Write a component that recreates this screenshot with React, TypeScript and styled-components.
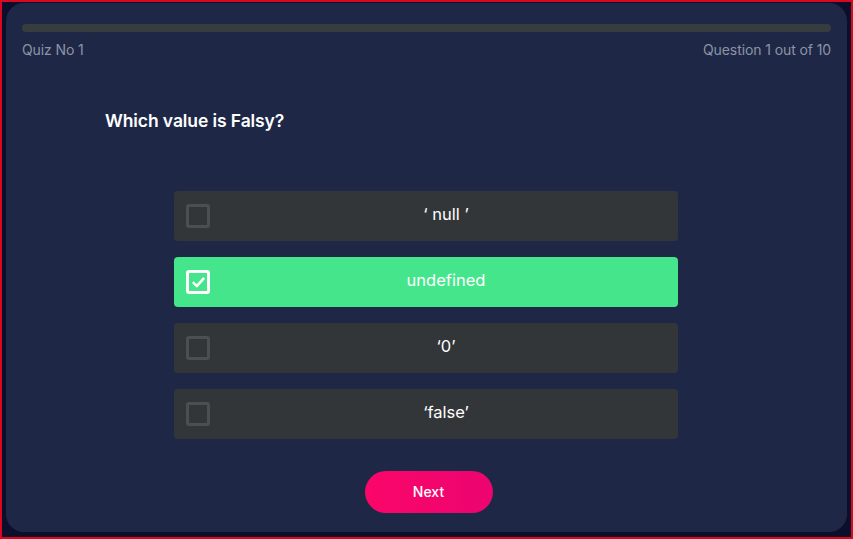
import React, { useState } from "react";
import styled, { createGlobalStyle } from "styled-components";

const GlobalStyle = createGlobalStyle`
  html, body {
    margin: 0;
    padding: 0;
    background: #0c0e2b;
  }
  * {
    box-sizing: border-box;
  }
`;

const Frame = styled.div`
  width: 853px;
  height: 539px;
  border: 2px solid #d8081e;
  background: #0c0e2b;
  padding: 1px 4px 5px 4px;
  font-family: Inter, "Liberation Sans", sans-serif;
`;

const Card = styled.div`
  height: 100%;
  background: #1e2846;
  border-radius: 18px;
  padding: 21px 16px 0 16px;
  display: flex;
  flex-direction: column;
`;

const Track = styled.div`
  height: 8px;
  border-radius: 4px;
  background: #373c3e;
  overflow: hidden;
`;

const Meta = styled.div`
  display: flex;
  justify-content: space-between;
  margin-top: 9px;
  font-size: 14px;
  color: #8d93a6;
  letter-spacing: -0.1px;
`;

const Question = styled.h2`
  margin: 52px 0 0 83px;
  font-size: 17.5px;
  font-weight: 600;
  color: #ffffff;
  letter-spacing: -0.1px;
`;

const Options = styled.div`
  width: 504px;
  margin: 60px 0 0 152px;
  display: flex;
  flex-direction: column;
  gap: 16px;
`;

const Option = styled.div<{ $selected: boolean }>`
  height: 50px;
  border-radius: 4px;
  background: ${(p) => (p.$selected ? "#45e68b" : "#333639")};
  display: flex;
  align-items: center;
  padding-left: 12px;
  gap: 4px;
  cursor: pointer;
`;

const Box = styled.div<{ $checked: boolean }>`
  width: 24px;
  height: 24px;
  border-radius: 3px;
  border: 3px solid ${(p) => (p.$checked ? "#ffffff" : "#4b4f52")};
  display: flex;
  align-items: center;
  justify-content: center;
  flex-shrink: 0;
`;

const Label = styled.span`
  flex: 1;
  text-align: center;
  font-size: 16.5px;
  font-weight: 400;
  color: #ffffff;
  margin-top: -5px;
`;

const Footer = styled.div`
  display: flex;
  justify-content: center;
  margin-top: 32px;
  padding-left: 4px;
`;

const NextButton = styled.button`
  width: 128px;
  height: 42px;
  border: none;
  border-radius: 21px;
  background: linear-gradient(90deg, #fb0669 0%, #ec0470 100%);
  color: #ffffff;
  font-family: Inter, "Liberation Sans", sans-serif;
  font-size: 14px;
  font-weight: 500;
  padding-bottom: 2px;
  cursor: pointer;
`;

const answers = ["\u2018 null \u2019", "undefined", "\u20180\u2019", "\u2018false\u2019"];

const Check = () => (
  <svg width="15" height="15" viewBox="0 0 14 14" fill="none">
    <path
      d="M2.4 7.4 L5.5 10.4 L11.6 3.4"
      stroke="#ffffff"
      strokeWidth="2.4"
      strokeLinecap="round"
      strokeLinejoin="round"
    />
  </svg>
);

export default function App() {
  const [picked, setPicked] = useState(1);
  return (
    <>
      <GlobalStyle />
      <Frame>
        <Card>
          <Track />
          <Meta>
            <span>Quiz No 1</span>
            <span>Question 1 out of 10</span>
          </Meta>
          <Question>Which value is Falsy?</Question>
          <Options>
            {answers.map((a, i) => (
              <Option key={a} $selected={picked === i} onClick={() => setPicked(i)}>
                <Box $checked={picked === i}>{picked === i && <Check />}</Box>
                <Label>{a}</Label>
              </Option>
            ))}
          </Options>
          <Footer>
            <NextButton>Next</NextButton>
          </Footer>
        </Card>
      </Frame>
    </>
  );
}
